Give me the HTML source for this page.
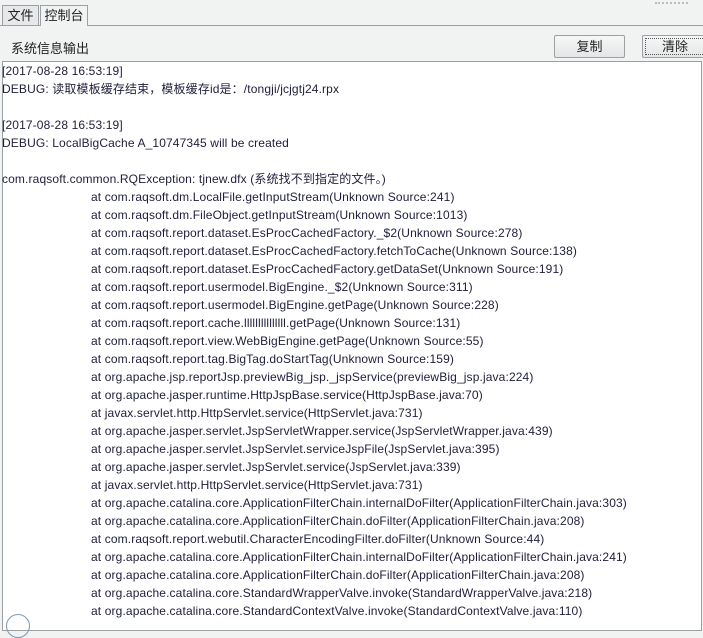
<!DOCTYPE html>
<html><head><meta charset="utf-8"><style>
body{margin:0;width:703px;height:619px;overflow:hidden;background:#f1f2f2;font-family:"Liberation Sans","Noto Sans CJK SC",sans-serif;font-size:12px;color:#222;position:relative}
.tab{position:absolute;top:5px;height:20px;border:1px solid #9aa0a4;border-bottom:none;background:#e6e8e9;font-size:13px;line-height:20px;text-align:center;box-sizing:border-box}
.line{position:absolute;left:0;width:703px;top:25px;height:1px;background:#9aa0a4}
.btn{position:absolute;top:35px;height:23px;border:1px solid #9aa0a4;border-radius:2px;background:linear-gradient(#f6f7f7,#e4e6e7);box-sizing:border-box;font-size:13px;line-height:21px;text-align:center}
.ta{position:absolute;left:2px;top:61px;width:700px;height:570px;background:#fff;border:1px solid #9aa0a4;box-sizing:border-box}
.t{position:absolute;left:2px;top:62px;line-height:18px;color:#1e1e3c;letter-spacing:0.13px}
.t div{height:18px;white-space:pre}
.i{padding-left:89px}
</style></head><body>
<div style="position:absolute;left:655px;top:0;width:33px;height:2px;border-bottom:2px dotted #b8bcbe"></div>
<div class="line"></div>
<div class="tab" style="left:2px;width:37px">文件</div>
<div class="tab" style="left:40px;width:48px;height:21px;background:#f1f2f2">控制台</div>
<div style="position:absolute;left:11px;top:38px;font-size:13px">系统信息输出</div>
<div class="btn" style="left:554px;width:71px">复制</div>
<div class="btn" style="left:642px;width:66px"><div style="position:absolute;left:2px;top:2px;right:2px;bottom:2px;border:1px dotted #555"></div>清除</div>
<div class="ta"></div>
<div class="t"><div>[2017-08-28 16:53:19]</div><div>DEBUG: 读取模板缓存结束，模板缓存id是：/tongji/jcjgtj24.rpx</div><div></div><div>[2017-08-28 16:53:19]</div><div>DEBUG: LocalBigCache A_10747345 will be created</div><div></div><div>com.raqsoft.common.RQException: tjnew.dfx (系统找不到指定的文件。)</div><div class="i">at com.raqsoft.dm.LocalFile.getInputStream(Unknown Source:241)</div><div class="i">at com.raqsoft.dm.FileObject.getInputStream(Unknown Source:1013)</div><div class="i">at com.raqsoft.report.dataset.EsProcCachedFactory._$2(Unknown Source:278)</div><div class="i">at com.raqsoft.report.dataset.EsProcCachedFactory.fetchToCache(Unknown Source:138)</div><div class="i">at com.raqsoft.report.dataset.EsProcCachedFactory.getDataSet(Unknown Source:191)</div><div class="i">at com.raqsoft.report.usermodel.BigEngine._$2(Unknown Source:311)</div><div class="i">at com.raqsoft.report.usermodel.BigEngine.getPage(Unknown Source:228)</div><div class="i">at com.raqsoft.report.cache.lllllllllllllll.getPage(Unknown Source:131)</div><div class="i">at com.raqsoft.report.view.WebBigEngine.getPage(Unknown Source:55)</div><div class="i">at com.raqsoft.report.tag.BigTag.doStartTag(Unknown Source:159)</div><div class="i">at org.apache.jsp.reportJsp.previewBig_jsp._jspService(previewBig_jsp.java:224)</div><div class="i">at org.apache.jasper.runtime.HttpJspBase.service(HttpJspBase.java:70)</div><div class="i">at javax.servlet.http.HttpServlet.service(HttpServlet.java:731)</div><div class="i">at org.apache.jasper.servlet.JspServletWrapper.service(JspServletWrapper.java:439)</div><div class="i">at org.apache.jasper.servlet.JspServlet.serviceJspFile(JspServlet.java:395)</div><div class="i">at org.apache.jasper.servlet.JspServlet.service(JspServlet.java:339)</div><div class="i">at javax.servlet.http.HttpServlet.service(HttpServlet.java:731)</div><div class="i">at org.apache.catalina.core.ApplicationFilterChain.internalDoFilter(ApplicationFilterChain.java:303)</div><div class="i">at org.apache.catalina.core.ApplicationFilterChain.doFilter(ApplicationFilterChain.java:208)</div><div class="i">at com.raqsoft.report.webutil.CharacterEncodingFilter.doFilter(Unknown Source:44)</div><div class="i">at org.apache.catalina.core.ApplicationFilterChain.internalDoFilter(ApplicationFilterChain.java:241)</div><div class="i">at org.apache.catalina.core.ApplicationFilterChain.doFilter(ApplicationFilterChain.java:208)</div><div class="i">at org.apache.catalina.core.StandardWrapperValve.invoke(StandardWrapperValve.java:218)</div><div class="i">at org.apache.catalina.core.StandardContextValve.invoke(StandardContextValve.java:110)</div></div>
<div style="position:absolute;left:6px;top:614px;width:22px;height:22px;border-radius:50%;border:1px solid #7a9ab0"></div>
</body></html>
